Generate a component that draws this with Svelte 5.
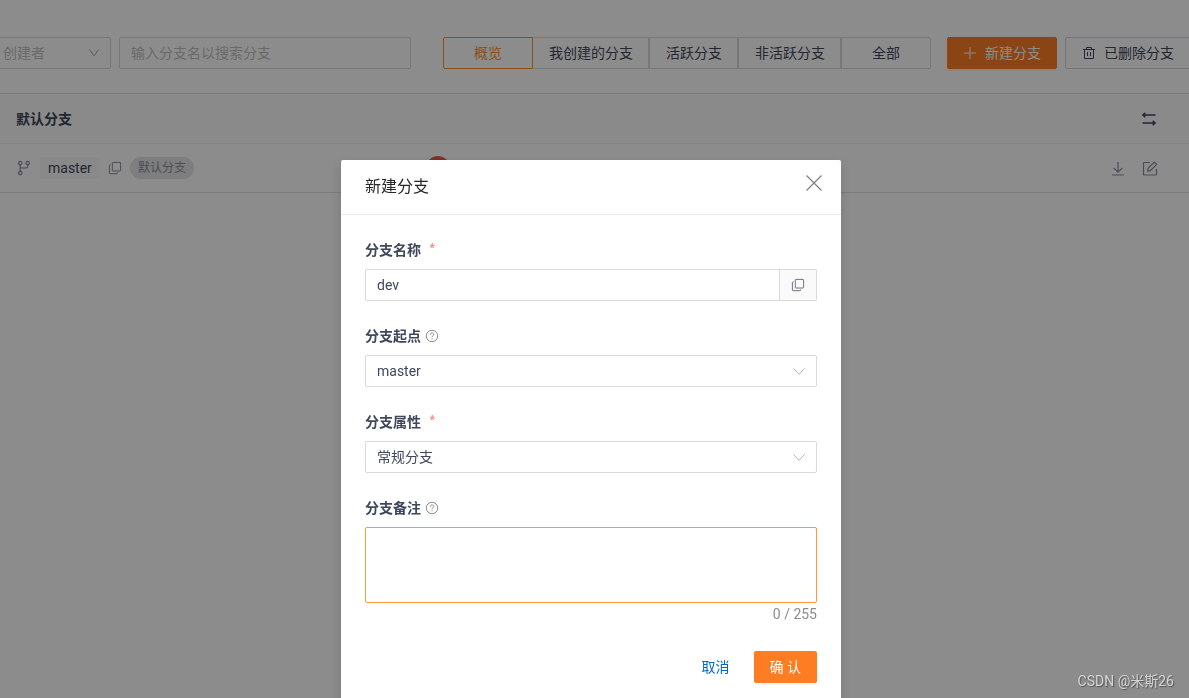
<script>
  const tabs = ['概览', '我创建的分支', '活跃分支', '非活跃分支', '全部'];
  let activeTab = $state('概览');
  let search = $state('');
  let name = $state('dev');
  let note = $state('');
</script>

{#snippet chevron()}
  <svg class="chevron" viewBox="0 0 12 12" width="12" height="12" aria-hidden="true">
    <path d="M0.5 3.500 L6 9.300 L11.5 3.500" />
  </svg>
{/snippet}

{#snippet copy()}
  <svg class="icon" viewBox="0 0 14 14" width="14" height="14" aria-hidden="true">
    <rect x="4.300" y="1.400" width="8.300" height="8.600" rx="0.600" />
    <path d="M2.700 3.800h-.6q-.7 0-.7.700v7.500q0 .7.700.7h6.800q.7 0 .7-.7v-.5" />
  </svg>
{/snippet}

{#snippet help()}
  <svg class="help" viewBox="0 0 14 14" width="14" height="14" aria-hidden="true">
    <circle cx="7" cy="7" r="5.700" />
    <path d="M5.200 5.700c0-2.400 3.600-2.300 3.600-.1 0 1.200-1.800 1.300-1.800 2.500M7 9.300v1" />
  </svg>
{/snippet}

<main class="page">
  <div class="toolbar">
    <div class="select creator">
      <select aria-label="创建者"><option>创建者</option></select>
      <svg class="chevron" viewBox="0 0 12 12" width="12" height="12" aria-hidden="true">
        <path d="M1.500 2.500 L6 9 L10.500 2.500" />
      </svg>
    </div>
    <input class="field search" type="text" aria-label="搜索分支" placeholder="输入分支名以搜索分支" bind:value={search} />
    <div class="tabs">
      {#each tabs as tab}
        <button type="button" class:active={tab === activeTab} onclick={() => (activeTab = tab)}>{tab}</button>
      {/each}
    </div>
    <button type="button" class="btn primary create">
      <svg class="icon" viewBox="0 0 14 14" width="14" height="14" aria-hidden="true"><path d="M7 1v12M1 7h12" /></svg>
      新建分支
    </button>
    <button type="button" class="btn deleted">
      <svg class="icon" viewBox="0 0 14 14" width="14" height="14" aria-hidden="true">
        <path d="M1 3.500h12M4.500 3.500v-2h5v2M2.500 3.500v9h9v-9M5.500 6v4M8.500 6v4" />
      </svg>
      已删除分支
    </button>
  </div>

  <section>
    <header class="section-head">
      <h2>默认分支</h2>
      <button type="button" class="plain dark" aria-label="切换">
        <svg class="icon bold" viewBox="0 0 16 16" width="16" height="16" aria-hidden="true">
          <path d="M14.500 4H2M4.300 1.700L1.800 4l2.500 2.300M1.500 12H14M11.700 9.700L14.200 12l-2.500 2.300" />
        </svg>
      </button>
    </header>
    <div class="row">
      <div class="branch">
        <svg class="icon medium" viewBox="0 0 16 16" width="16" height="16" aria-hidden="true">
          <circle cx="4.200" cy="3" r="1.700" />
          <circle cx="11.700" cy="3" r="1.700" />
          <circle cx="4.200" cy="13" r="1.700" />
          <path d="M4.200 4.700v6.600M11.700 4.700v1.800q0 1.500-1.500 1.500H4.200" />
        </svg>
        <a href="#master">master</a>
        <button type="button" class="plain" aria-label="复制分支名">{@render copy()}</button>
        <span class="tag">默认分支</span>
      </div>
      <span class="avatar"></span>
      <div class="actions">
        <button type="button" class="plain" aria-label="下载">
          <svg class="icon medium" viewBox="0 0 16 16" width="16" height="16" aria-hidden="true">
            <path d="M8 2v10M3.800 8L8 12.200 12.200 8M2 15h12" />
          </svg>
        </button>
        <button type="button" class="plain" aria-label="编辑">
          <svg class="icon medium" viewBox="0 0 16 16" width="16" height="16" aria-hidden="true">
            <path d="M8 2.500H2.100q-.6 0-.6.600v11.300q0 .6.600.6h11.800q.6 0 .6-.6V9M5.700 11l.4-2.700 6.300-6.300 2.300 2.300L8.400 10.600z" />
          </svg>
        </button>
      </div>
    </div>
  </section>
</main>

<div class="mask">
  <div class="dialog" role="dialog" aria-modal="true" aria-labelledby="dialog-title">
    <header class="dialog-head">
      <h1 id="dialog-title">新建分支</h1>
      <button type="button" class="plain close" aria-label="关闭">
        <svg class="icon medium" viewBox="0 0 16 16" width="16" height="16" aria-hidden="true"><path d="M0.500 0.500l15 15M15.500 0.500l-15 15" /></svg>
      </button>
    </header>
    <form onsubmit={(e) => e.preventDefault()}>
      <div class="item">
        <div class="label"><label for="name">分支名称</label><span class="star">*</span></div>
        <div class="group">
          <input id="name" class="field" type="text" bind:value={name} />
          <button type="button" class="addon" aria-label="复制">{@render copy()}</button>
        </div>
      </div>
      <div class="item">
        <div class="label"><label for="start">分支起点</label>{@render help()}</div>
        <div class="select">
          <select id="start"><option>master</option></select>
          {@render chevron()}
        </div>
      </div>
      <div class="item">
        <div class="label"><label for="kind">分支属性</label><span class="star">*</span></div>
        <div class="select">
          <select id="kind"><option>常规分支</option></select>
          {@render chevron()}
        </div>
      </div>
      <div class="item">
        <div class="label"><label for="note">分支备注</label>{@render help()}</div>
        <textarea id="note" maxlength="255" bind:value={note}></textarea>
        <div class="count">{note.length} / 255</div>
      </div>
      <footer>
        <button type="button" class="link">取消</button>
        <button type="submit" class="btn primary confirm">确 认</button>
      </footer>
    </form>
  </div>
</div>
<div class="watermark">CSDN @米斯26</div>

<style>
  :global(body) {
    background: #fff;
    color: #3f475a;
    font: 14px/22px Roboto, 'Noto Sans CJK SC', sans-serif;
    overflow: hidden;
  }
  * {
    box-sizing: border-box;
  }
  h1,
  h2 {
    margin: 0;
  }
  button,
  input,
  select,
  textarea {
    font: inherit;
    color: inherit;
    margin: 0;
    outline: 0;
  }
  button {
    cursor: pointer;
    white-space: nowrap;
  }
  svg {
    display: block;
    flex: none;
    fill: none;
    stroke: currentColor;
  }
  .medium {
    stroke-width: 1.2;
  }
  .bold {
    stroke-width: 1.4;
  }
  .page {
    overflow: hidden;
  }
  .toolbar {
    display: flex;
    gap: 8px;
    margin: 0 -2px 0 -9px;
    padding: 37px 0 24px;
  }
  .field,
  select {
    width: 100%;
    height: 32px;
    padding: 0 11px;
    border: 1px solid #d9d9d9;
    border-radius: 2px;
    background: #fff;
  }
  select {
    appearance: none;
  }
  .select {
    display: grid;
    align-items: center;
  }
  .select > :global(*) {
    grid-area: 1 / 1;
  }
  .chevron {
    justify-self: end;
    margin-right: 12px;
    color: #b5b5b5;
    pointer-events: none;
  }
  .creator {
    flex: none;
    width: 120px;
    color: #bfbfbf;
  }
  .creator .chevron {
    margin-right: 11px;
    color: #a6a6a6;
  }
  .search {
    flex: 1;
    min-width: 0;
  }
  .search::placeholder {
    color: #bfbfbf;
  }
  .tabs {
    display: flex;
    flex: none;
    margin: 0 8px 0 24px;
  }
  .tabs button {
    min-width: 90px;
    height: 32px;
    padding: 0 16px;
    border: 1px solid #d9d9d9;
    background: #fff;
  }
  .tabs button + button {
    margin-left: -1px;
    box-shadow: -1px 0 #d9d9d9;
  }
  .tabs button:first-child {
    border-radius: 2px 0 0 2px;
  }
  .tabs button:last-child {
    border-radius: 0 2px 2px 0;
  }
  .tabs button.active {
    position: relative;
    border-color: #fe912d;
    color: #fe912d;
  }
  .btn {
    display: flex;
    flex: none;
    align-items: center;
    justify-content: center;
    gap: 8px;
    height: 32px;
    padding: 0 16px;
    border: 1px solid #d0d5de;
    border-radius: 2px;
    background: #fff;
  }
  .create {
    padding: 0 15px;
  }
  .primary {
    border-color: #fe7d23;
    background: #fe7d23;
    color: #fff;
    box-shadow: 0 2px 0 rgba(0, 0, 0, 0.04);
  }
  .section-head {
    display: flex;
    align-items: center;
    justify-content: space-between;
    height: 51px;
    padding: 0 32px 0 16px;
    border-top: 1px solid #e4e4e4;
    border-bottom: 1px solid #f0f0f0;
    background: #fbfbfb;
  }
  h2 {
    font-size: 14px;
    font-weight: 700;
  }
  .plain {
    display: flex;
    padding: 0;
    border: 0;
    background: none;
    color: #898f9f;
  }
  .dark {
    color: #3f475a;
  }
  .row {
    display: flex;
    align-items: center;
    height: 49px;
    padding: 0 31px 0 16px;
    border-bottom: 1px solid #e0e0e0;
  }
  .branch {
    display: flex;
    flex: none;
    align-items: center;
    width: 410px;
    color: #898f9f;
  }
  .branch a {
    margin: 0 8px;
    padding: 0 8px;
    border-radius: 2px;
    background: #f9f9f9;
    color: #3f475a;
    text-decoration: none;
  }
  .tag {
    margin-left: 8px;
    padding: 0 8px;
    border-radius: 11px;
    background: #e5e5e5;
    font-size: 12px;
  }
  .avatar {
    width: 24px;
    height: 24px;
    border-radius: 50%;
    background: #e65d48;
  }
  .actions {
    display: flex;
    gap: 16px;
    margin-left: auto;
  }
  .mask {
    position: fixed;
    inset: 0;
    padding: 160px 7px 0 0;
    overflow: hidden;
    background: rgba(0, 0, 0, 0.45);
  }
  .dialog {
    width: 500px;
    max-width: 100%;
    margin: 0 auto;
    border-radius: 2px;
    background: #fff;
    box-shadow: 0 4px 12px rgba(0, 0, 0, 0.15);
  }
  .dialog-head {
    display: flex;
    align-items: flex-start;
    justify-content: space-between;
    padding: 15px 19px 15px 24px;
    border-bottom: 1px solid #ebebeb;
  }
  h1 {
    color: #262626;
    font-size: 16px;
    font-weight: 400;
    line-height: 24px;
  }
  .close {
    color: #7f7f7f;
  }
  form {
    padding: 24px;
  }
  .item + .item {
    margin-top: 24px;
  }
  .label {
    display: flex;
    align-items: center;
    margin-bottom: 8px;
    font-weight: 700;
  }
  .star {
    margin-left: 7px;
    color: #ff6f66;
    font-family: 'Liberation Mono', monospace;
    font-weight: 400;
  }
  .help {
    margin-left: 4px;
    color: #8c8c8c;
  }
  .group {
    display: flex;
  }
  .group .field {
    border-radius: 2px 0 0 2px;
  }
  .addon {
    display: flex;
    flex: none;
    align-items: center;
    justify-content: center;
    width: 37px;
    padding: 0;
    border: 1px solid #d9d9d9;
    border-left: 0;
    border-radius: 0 2px 2px 0;
    background: #fafafa;
    color: #6b7284;
  }
  textarea {
    display: block;
    width: 100%;
    height: 76px;
    padding: 4px 11px;
    border: 1px solid #ff9838;
    border-radius: 2px;
    resize: none;
  }
  .count {
    color: #8c8c8c;
    text-align: right;
  }
  footer {
    display: flex;
    align-items: center;
    justify-content: flex-end;
    gap: 24px;
    margin-top: 26px;
  }
  .link {
    padding: 0;
    border: 0;
    background: none;
    color: #0d66b8;
  }
  .confirm {
    padding: 0 15px;
  }
  .watermark {
    position: fixed;
    right: 15px;
    bottom: 6px;
    color: #d4d4d4;
    text-shadow: 1px 1px 1px #555;
  }
</style>
